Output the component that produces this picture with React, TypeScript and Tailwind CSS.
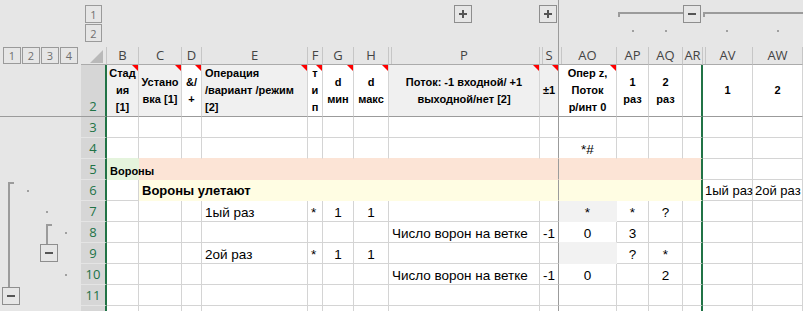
import { Fragment, type ReactNode } from "react";
import { twMerge } from "tailwind-merge";

const COLS = ["B", "C", "D", "E", "F", "G", "H", "P", "S", "AO", "AP", "AQ", "AR", "AV", "AW"];

// hidden columns sit right before these -> double line in the letter header
const AFTER_HIDDEN = ["P", "S", "AO", "AV"];

const ALIGN: Record<string, string> = {
  G: "justify-center",
  H: "justify-center",
  AO: "justify-center",
  AP: "justify-center",
  AQ: "justify-center",
  S: "justify-end",
};

const HEADER: Record<string, { lines: string[]; gray?: boolean; left?: boolean; note?: boolean }> = {
  B: { lines: ["Стад", "ия", "[1]"], gray: true, note: true },
  C: { lines: ["Устано", "вка [1]"], gray: true, note: true },
  D: { lines: ["&/", "+"], note: true },
  E: { lines: ["Операция", "/вариант /режим", "[2]"], gray: true, left: true, note: true },
  F: { lines: ["т", "и", "п"], note: true },
  G: { lines: ["d", "мин"], note: true },
  H: { lines: ["d", "макс"], note: true },
  P: { lines: ["Поток: -1 входной/ +1", "выходной/нет [2]"], gray: true, note: true },
  S: { lines: ["±1"], gray: true, note: true },
  AO: { lines: ["Опер z,", "Поток", "р/инт 0"], note: true },
  AP: { lines: ["1", "раз"] },
  AQ: { lines: ["2", "раз"] },
  AR: { lines: [] },
  AV: { lines: ["1"] },
  AW: { lines: ["2"] },
};

const DATA: Record<number, Partial<Record<string, ReactNode>>> = {
  4: { AO: "*#" },
  5: { B: "Вороны" },
  6: { C: "Вороны улетают", AV: "1ый раз", AW: "2ой раз" },
  7: { E: "1ый раз", F: "*", G: "1", H: "1", AO: "*", AP: "*", AQ: "?" },
  8: { P: "Число ворон на ветке", S: "-1", AO: "0", AP: "3" },
  9: { E: "2ой раз", F: "*", G: "1", H: "1", AP: "?", AQ: "*" },
  10: { P: "Число ворон на ветке", S: "-1", AO: "0", AQ: "2" },
};

const EXTRA: Record<string, string> = {
  "5B": "z-10 text-[11px] font-bold",
  "6C": "z-10 text-[13px] font-bold",
  "6AV": "pl-[2px] text-[13px]",
  "6AW": "pl-[2px] text-[13px]",
};

const FILLS = {
  green: { cell: "bg-[#e5f4dd] border-r-[#e5f4dd] border-b-[#e5f4dd]", above: "border-b-[#e5f4dd]" },
  peach: { cell: "bg-[#fce4d6] border-r-[#fce4d6] border-b-[#fce4d6]", above: "border-b-[#fce4d6]" },
  yellow: { cell: "bg-[#fffde3] border-r-[#fffde3] border-b-[#fffde3]", above: "border-b-[#fffde3]" },
  gray: { cell: "bg-[#f2f2f2] border-r-[#f2f2f2] border-b-[#f2f2f2]", above: "border-b-[#f2f2f2]" },
};

const BAND = ["C", "D", "E", "F", "G", "H", "P", "S", "AO", "AP", "AQ", "AR"];

function fillOf(row: number, col: string) {
  if (row === 5 && col === "B") return FILLS.green;
  if (row === 5 && BAND.includes(col)) return FILLS.peach;
  if (row === 6 && BAND.includes(col)) return FILLS.yellow;
  if ((row === 7 || row === 9) && col === "AO") return FILLS.gray;
  return null;
}

// freeze line after S, green selection edge after AR
function colEdge(col: string) {
  if (col === "S") return "border-r-[#9b9b9b]";
  if (col === "AR") return "border-r-2 border-r-[#217346]";
  return "";
}

function LevelBtn({ label, size }: { label: string; size: string }) {
  return (
    <div
      className={`flex items-center justify-center border border-[#9a9a9a] font-['Open_Sans',sans-serif] text-[11px] leading-none text-[#6f6f6f] ${size}`}
    >
      {label}
    </div>
  );
}

function TopOutline() {
  const x = (abs: number) => abs - 107;
  return (
    <div className="col-span-full flex">
      <div className="w-[81px]" />
      <div className="flex w-[26px] flex-col gap-[1px] pl-[4px] pt-[5px]">
        <LevelBtn label="1" size="h-[18px] w-[17px]" />
        <LevelBtn label="2" size="h-[18px] w-[17px]" />
      </div>
      <svg width="696" height="47" className="block">
        {/* collapsed groups */}
        <rect x={x(454.5)} y="5.5" width="17" height="17" fill="none" stroke="#8e8e8e" />
        <rect x={x(459)} y="13" width="8" height="2" fill="#555" />
        <rect x={x(462)} y="10" width="2" height="8" fill="#555" />
        <rect x={x(539.5)} y="5.5" width="17" height="17" fill="none" stroke="#8e8e8e" />
        <rect x={x(544)} y="13" width="8" height="2" fill="#555" />
        <rect x={x(547)} y="10" width="2" height="8" fill="#555" />
        {/* freeze line */}
        <rect x={x(558)} y="0" width="1" height="47" fill="#9b9b9b" />
        {/* open group */}
        <rect x={x(618)} y="12" width="65" height="2" fill="#9b9b9b" />
        <rect x={x(618)} y="12" width="2" height="5" fill="#9b9b9b" />
        <rect x={x(683.5)} y="5.5" width="17" height="17" fill="none" stroke="#8e8e8e" />
        <rect x={x(688)} y="13" width="8" height="2" fill="#555" />
        <rect x={x(703)} y="12" width="100" height="2" fill="#9b9b9b" />
        <rect x={x(703)} y="12" width="2" height="5" fill="#9b9b9b" />
        {[633, 666, 727, 778].map((d) => (
          <rect key={d} x={x(d - 1)} y="30" width="2" height="2" fill="#a0a0a0" />
        ))}
      </svg>
    </div>
  );
}

function LeftOutline() {
  return (
    <div className="col-start-1 row-[4/14]">
      <svg width="81" height="210" className="block">
        <rect x="8" y="65" width="2" height="105" fill="#9b9b9b" />
        <rect x="8" y="65" width="6" height="2" fill="#9b9b9b" />
        <rect x="2.5" y="170.5" width="17" height="17" fill="none" stroke="#8e8e8e" />
        <rect x="7" y="178" width="8" height="2" fill="#555" />
        <rect x="46" y="107" width="2" height="20" fill="#9b9b9b" />
        <rect x="46" y="107" width="6" height="2" fill="#9b9b9b" />
        <rect x="40.5" y="127.5" width="17" height="17" fill="none" stroke="#8e8e8e" />
        <rect x="45" y="135" width="8" height="2" fill="#555" />
        <rect x="27" y="73" width="2" height="2" fill="#a0a0a0" />
        <rect x="46" y="94" width="2" height="2" fill="#a0a0a0" />
        <rect x="65" y="115" width="2" height="2" fill="#a0a0a0" />
        <rect x="65" y="157" width="2" height="2" fill="#a0a0a0" />
      </svg>
    </div>
  );
}

function RowNum({ n, label = true }: { n: number; label?: boolean }) {
  return (
    <div
      className={twMerge(
        "flex items-end justify-center border-b border-r-2 border-b-[#e4e4e4] border-r-[#217346] bg-[#d6d6d6] pb-[2px] font-['Open_Sans',sans-serif] text-[13px] leading-[16px] text-[#217346]",
        n === 2 && "border-b-[#9b9b9b]"
      )}
    >
      {label ? n : null}
    </div>
  );
}

function NoteMark() {
  return <span className="absolute right-0 top-0 h-0 w-0 border-l-[6px] border-t-[6px] border-l-transparent border-t-[#ff0000]" />;
}

export default function App() {
  return (
    <div className="grid h-[311px] w-[803px] grid-cols-[81px_26px_32px_43px_20px_106px_15px_31px_35px_151px_19px_58px_32px_34px_20px_50px_50px] grid-rows-[47px_18px_52px_repeat(10,21px)] overflow-hidden bg-[#e6e6e6] font-['Liberation_Sans',Arial,sans-serif]">
      <TopOutline />

      {/* column letters */}
      <div className="flex items-start gap-[1px] pl-[3px]">
        {["1", "2", "3", "4"].map((l) => (
          <LevelBtn key={l} label={l} size="h-[17px] w-[18px]" />
        ))}
      </div>
      <div className="border-b border-r border-b-[#ababab] border-r-[#c6c6c6]">
        <svg width="25" height="17" className="block">
          <polygon points="9,16 22,16 22,3" fill="#b9b9b9" />
        </svg>
      </div>
      {COLS.map((c) => (
        <div
          key={c}
          className={twMerge(
            "flex items-center justify-center border-b border-r border-b-[#ababab] border-r-[#c6c6c6] font-['Open_Sans',sans-serif] text-[13px] leading-none text-[#444]",
            AFTER_HIDDEN.includes(c) && "shadow-[inset_2px_0_0_#e6e6e6,inset_3px_0_0_#c6c6c6]",
            c === "S" && "border-r-[#9b9b9b]"
          )}
        >
          {c}
        </div>
      ))}

      {/* row 2: header texts */}
      <div className="border-b border-b-[#9b9b9b]" />
      <RowNum n={2} />
      {COLS.map((c) => {
        const h = HEADER[c];
        return (
          <div
            key={c}
            className={twMerge(
              "relative flex flex-col justify-center whitespace-nowrap border-b border-r border-b-[#9b9b9b] border-r-[#d4d4d4] bg-white text-[11px] font-bold leading-[17px] text-black",
              h.gray && "bg-[#f0f0f0]",
              h.left ? "items-start pl-[3px]" : "items-center text-center",
              colEdge(c)
            )}
          >
            {h.lines.map((l) => (
              <span key={l}>{l}</span>
            ))}
            {h.note && <NoteMark />}
          </div>
        );
      })}

      <LeftOutline />
      {[3, 4, 5, 6, 7, 8, 9, 10, 11, 12].map((r) => (
        <Fragment key={r}>
          <RowNum n={r} label={r < 12} />
          {COLS.map((c) => {
            const fill = fillOf(r, c);
            const below = fillOf(r + 1, c);
            return (
              <div
                key={c}
                className={twMerge(
                  "relative flex min-w-0 items-end whitespace-nowrap border-b border-r border-b-[#d4d4d4] border-r-[#d4d4d4] bg-white px-[3px] text-[13.5px] leading-[16px] text-black",
                  ALIGN[c],
                  below?.above,
                  fill?.cell,
                  colEdge(c),
                  EXTRA[`${r}${c}`]
                )}
              >
                {DATA[r]?.[c]}
              </div>
            );
          })}
        </Fragment>
      ))}
    </div>
  );
}
